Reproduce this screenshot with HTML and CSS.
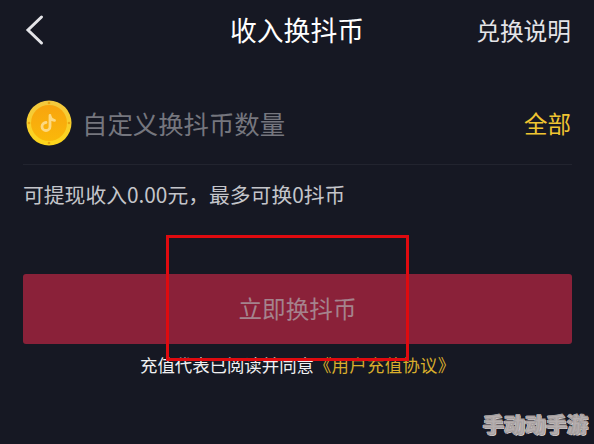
FILE: index.html
```html
<!DOCTYPE html>
<html lang="zh-CN">
<head>
<meta charset="utf-8">
<title>收入换抖币</title>
<link rel="stylesheet" href="styles.css">
</head>
<body>
<div class="screen">
  <header class="nav">
    <svg class="back" width="20" height="32" viewBox="0 0 20 32" aria-hidden="true"><path d="M16.500 3 3 16l13.500 13" fill="none" stroke="#e4e4e8" stroke-width="3" stroke-linecap="round" stroke-linejoin="miter"/></svg>
    <h1 class="title">收入换抖币</h1>
    <span class="help">兑换说明</span>
  </header>
  <section class="amount">
    <svg class="coin" width="46" height="46" viewBox="0 0 46 46" aria-hidden="true">
      <defs>
        <linearGradient id="rim" x1="0" y1="0" x2="0" y2="1"><stop offset="0" stop-color="#f3c83f"/><stop offset="1" stop-color="#fdd61a"/></linearGradient>
        <linearGradient id="face" x1="0" y1="0" x2="0" y2="1"><stop offset="0" stop-color="#f8a40e"/><stop offset="1" stop-color="#fab80a"/></linearGradient>
      </defs>
      <circle cx="23" cy="23" r="22.500" fill="url(#rim)"/>
      <circle cx="23" cy="23" r="18" fill="url(#face)"/>
      <circle cx="23" cy="3" r="1.300" fill="#e8a512"/><circle cx="23" cy="43" r="1.300" fill="#e8a512"/><circle cx="3" cy="23" r="1.300" fill="#e8a512"/><circle cx="43" cy="23" r="1.300" fill="#e8a512"/>
      <path d="M24 15.500v11a4 4 0 1 1-4-4M24 16c.6 2.700 2.200 4.100 4.500 4.300" fill="none" stroke="#fcd982" stroke-width="2.800" stroke-linecap="round"/>
    </svg>
    <span class="placeholder">自定义换抖币数量</span>
    <span class="all">全部</span>
  </section>
  <p class="info">可提现收入0.00元，最多可换0抖币</p>
  <button class="submit" type="button">立即换抖币</button>
  <p class="legal">充值代表已阅读并同意<span class="link">《用户充值协议》</span></p>
  <div class="highlight"></div>
  <div class="watermark">手动动手游</div>
</div>
</body>
</html>
```
FILE: styles.css
```css
* { box-sizing: border-box; }
html, body { margin: 0; padding: 0; }
body { background: #161823; }
.screen {
  position: relative;
  width: 594px;
  height: 444px;
  overflow: hidden;
  padding: 0 22px 0 23px;
  background: #161823;
  font-family: "Noto Sans CJK SC", "Noto Sans", sans-serif;
  color: #e6e6ea;
}
.nav {
  position: relative;
  display: flex;
  align-items: center;
  justify-content: space-between;
  height: 60px;
  padding-left: 2px;
  padding-right: 1px;
}
.back { display: block; }
.title {
  position: absolute;
  left: 207px;
  top: 11px;
  margin: 0;
  font-size: 26.800px;
  line-height: 38px;
  font-weight: 400;
  color: #fff;
}
.help { font-size: 23.700px; line-height: 34px; color: #e4e4e8; }
.amount {
  display: flex;
  align-items: center;
  height: 105px;
  padding: 22px 1px 0 3px;
  border-bottom: 1px solid #22242f;
}
.coin { display: block; flex: none; }
.placeholder { margin-left: 10px; font-size: 25.400px; line-height: 36px; color: #75767e; }
.all { margin-left: auto; font-size: 23.500px; line-height: 34px; color: #f0c531; }
.info { margin: 15px 0 0; font-size: 20.800px; line-height: 28px; color: #c4c5ca; white-space: nowrap; }
.submit {
  display: block;
  width: 549px;
  height: 70px;
  margin: 66px 0 0;
  padding: 0 0 3px;
  border: 0;
  border-radius: 3px;
  background: #8a2139;
  font: inherit;
  font-size: 23.600px;
  color: #a5838d;
}
.legal { margin: 9px 0 0; padding-left: 117px; font-size: 17.400px; line-height: 24px; white-space: nowrap; color: #f0f0f2; }
.link { color: #d9ae2c; letter-spacing: 0.300px; }
.highlight {
  position: absolute;
  left: 166px;
  top: 235px;
  width: 243px;
  height: 126px;
  border: 3px solid #df0a0f;
}
.watermark {
  position: absolute;
  left: 483px;
  top: 409px;
  font-size: 21px;
  line-height: 28px;
  font-weight: 900;
  white-space: nowrap;
  color: #b5aeae;
  -webkit-text-stroke: 1px #a39c9c;
  text-shadow: 1px 1px 0 #e6e0e0, -1px 0 0 #e6e0e0;
}
```
